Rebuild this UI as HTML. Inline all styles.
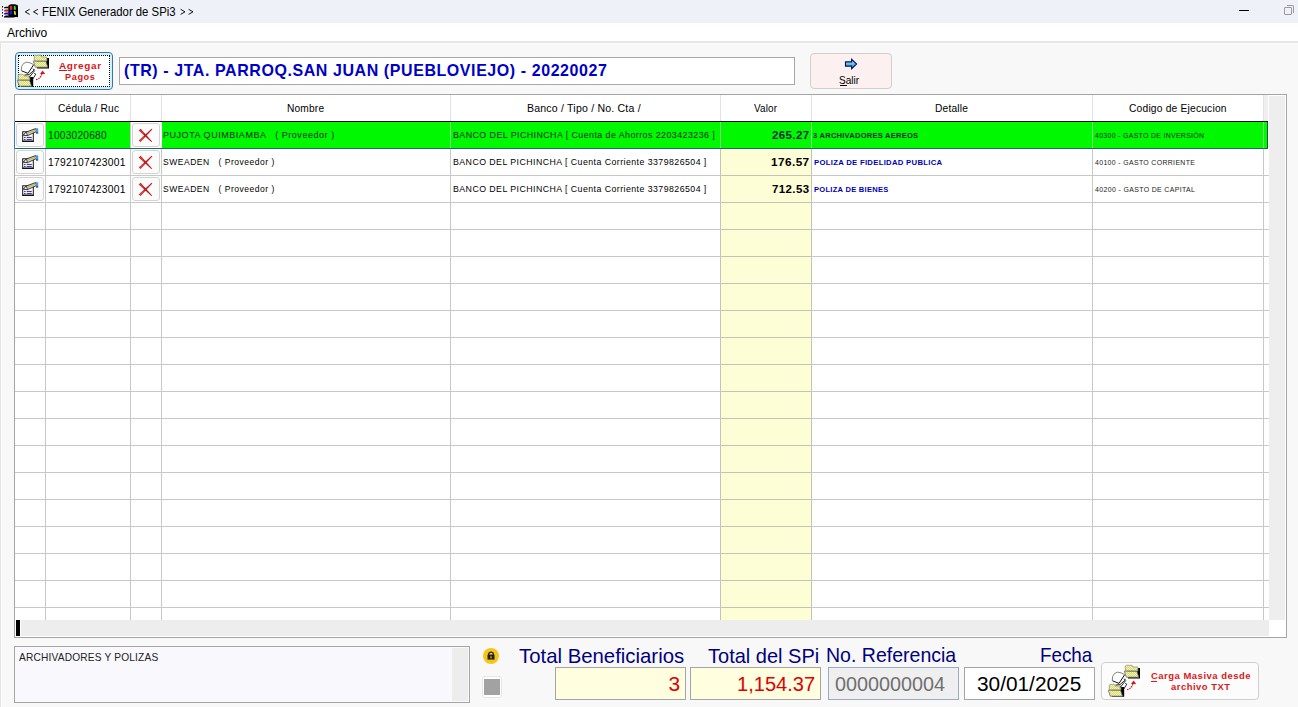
<!DOCTYPE html>
<html><head><meta charset="utf-8">
<style>
*{margin:0;padding:0;box-sizing:border-box}
html,body{width:1298px;height:707px;overflow:hidden;background:#f8f8f8;font-family:"Liberation Sans",sans-serif;position:relative}
.a{position:absolute}
.t{position:absolute;white-space:nowrap;line-height:1;transform-origin:0 0}
.vl{position:absolute;width:1px;background:#c8c8c8;top:122px;height:498px}
.hs{position:absolute;width:1px;background:#e2e2e6;top:95px;height:26px}
.hl{position:absolute;height:1px;background:#c8c8c8;left:15px;width:1254px}
.btn{position:absolute;border:1px solid #d3d3d3;border-radius:3px;background:#fbfbfb}
</style></head>
<body>
<!-- title bar -->
<div class="a" style="left:0;top:0;width:1298px;height:19px;background:#eef2f8"></div>
<div class="a" style="left:0;top:19px;width:1298px;height:4px;background:#f0f0f4"></div>
<!-- app icon -->
<svg class="a" style="left:0;top:0" width="20" height="20" viewBox="0 0 20 20">
<rect x="2" y="6" width="1" height="1.5" fill="#000"/><rect x="2" y="9" width="1" height="1.5" fill="#7a2020"/>
<rect x="2" y="12" width="1" height="1.5" fill="#101080"/><rect x="2" y="15" width="1" height="1.5" fill="#000"/>
<path d="M4 7.3 H5 L5.5 6.8 H8.5 V8.2 H4 Z" fill="#000"/>
<path d="M4 10.2 H5 L5.5 9.6 H8.5 V11.5 H4 Z" fill="#d01010"/>
<path d="M4 13.2 H5 L5.5 12.6 H8.5 V14.5 H4 Z" fill="#1010c0"/>
<path d="M4 16.2 H5 L5.5 15.6 H8.5 V17.5 H4 Z" fill="#000"/>
<path d="M8.3 5.8 Q9 4.8 10.5 4.5 L11 4.2 H15 L16.5 4.8 Q17.5 5 18 5.8 V17.5 L17.2 17 H15 L14 17.5 H10 L8.3 17.8 Z" fill="#000"/>
<path d="M9.8 6 L12.3 5.8 L12.3 9.8 L9.8 10 Z" fill="#e02828"/>
<path d="M13.8 5.8 L15.5 6.2 L16 9.8 L13.8 9.8 Z" fill="#30e040"/>
<path d="M9.8 10.8 L12.3 10.8 L12.3 14.5 L9.8 14.5 Z" fill="#1818d8"/>
<path d="M13.8 11 L15.5 11.2 L16 15 L14.2 14.6 Z" fill="#f0e820"/>
</svg>
<svg class="a" style="left:20px;top:6px" width="180" height="12" viewBox="0 0 180 12">
<path d="M9.6 3.3 L5.2 5.85 L9.6 8.4 M17.9 3.3 L13.5 5.85 L17.9 8.4 M160.6 3.3 L165 5.85 L160.6 8.4 M168.6 3.3 L173 5.85 L168.6 8.4" fill="none" stroke="#111" stroke-width="1"/>
</svg>
<!-- window buttons -->
<div class="a" style="left:1239px;top:10px;width:10px;height:1px;background:#000"></div>
<div class="a" style="left:1284px;top:7px;width:8px;height:8px;border:1px solid #9a9a9a;border-radius:1px"></div>
<div class="a" style="left:1287px;top:5px;width:7px;height:8px;border-top:1px solid #9a9a9a;border-right:1px solid #9a9a9a;border-radius:0 2px 0 0"></div>
<!-- menu bar -->
<div class="a" style="left:0;top:23px;width:1298px;height:18px;background:#fff"></div>
<div class="a" style="left:0;top:41px;width:1298px;height:2px;background:#e6e6e8"></div>
<div class="a" style="left:0;top:43px;width:1298px;height:1px;background:#fdfdfd"></div>
<div class="a" style="left:0;top:43px;width:1px;height:664px;background:#e4e4e6"></div>
<div class="a" style="left:1px;top:44px;width:1px;height:663px;background:#fdfdfd"></div>

<!-- Agregar button -->
<div class="a" style="left:15px;top:52px;width:98px;height:38px;border:1px solid #3a72ac;border-radius:4px;background:#fff;box-shadow:inset 0 0 0 2px #ccf2fc"></div>
<div class="a" style="left:18px;top:55px;width:92px;height:32px;border:1px dotted #000"></div>
<svg id="icoA" class="a" style="left:15px;top:53px" width="36" height="36" viewBox="0 0 36 36">
<defs><pattern id="chk" width="2" height="2" patternUnits="userSpaceOnUse"><rect width="2" height="2" fill="#f4f4b8"/><rect width="1" height="1" fill="#d8d870"/><rect x="1" y="1" width="1" height="1" fill="#d8d870"/></pattern></defs>
<path d="M22 5 H34 V15.5 H22 Z" fill="#000"/>
<path d="M19.3 8 V3 L20 2.3 H26 L27 4 H31.8 V8 Z" fill="url(#chk)" stroke="#9a9a7a" stroke-width="0.8"/>
<path d="M18.3 8.2 H30.8 L32.8 14.2 H20.3 Z" fill="url(#chk)" stroke="#6a6a6a" stroke-width="0.8"/>
<path d="M6 24 H18.2 V33.8 H6 Z" fill="#000"/>
<path d="M3.3 27 V22 L4 21.3 H8 L9 23 H14.8 V27 Z" fill="url(#chk)" stroke="#9a9a7a" stroke-width="0.8"/>
<path d="M2.3 27.2 H14.5 L16.5 33.2 H4.3 Z" fill="url(#chk)" stroke="#6a6a6a" stroke-width="0.8"/>
<path d="M6.3 17.8 L6.6 13.5 L8.5 10.5 L11.5 9.2 L15 9.8 L18.6 11.6 L13 20.4 Z" fill="#fff" stroke="none"/>
<path d="M6.3 17.8 L6.6 13.5 L8.5 10.5 L11.5 9.2 L15 9.8 L18.6 11.6" fill="none" stroke="#666" stroke-width="0.8"/>
<path d="M6.5 17.8 L13 20.4 L18.6 11.8" fill="none" stroke="#111" stroke-width="1"/>
<path d="M9.5 22 L14 21.6 L19.5 16.8 L17.8 16 M14 24.5 L19.8 17.5 M16.2 28.5 L20.8 21.2 L19.2 20.4" fill="none" stroke="#111" stroke-width="0.9"/>
<path d="M21 26.6 Q25.6 26 27.2 20" fill="none" stroke="#e01010" stroke-width="1.1" stroke-dasharray="1.6 0.8"/>
<path d="M25 21 L27.6 17.6 L30.2 21 Z" fill="#e01010"/>
</svg>
<div class="a" style="left:59px;top:70px;width:8px;height:1px;background:#d81020"></div>

<!-- header textbox -->
<div class="a" style="left:119px;top:57px;width:676px;height:28px;border:1px solid #a8a8a8;background:#fff"></div>

<!-- Salir button -->
<div class="a" style="left:810px;top:53px;width:82px;height:36px;border:1px solid #cfcfcf;border-radius:4px;background:#fdf0f0"></div>
<svg class="a" style="left:844px;top:58px" width="15" height="12" viewBox="0 0 15 12">
<defs><linearGradient id="ag" x1="0" y1="0" x2="0" y2="1"><stop offset="0" stop-color="#bfe8ff"/><stop offset="0.5" stop-color="#5cc0f4"/><stop offset="1" stop-color="#2a90d8"/></linearGradient></defs>
<path d="M1.5 3.9 H7.6 V1.3 L12.6 6 L7.6 10.7 V8.1 H1.5 Z" fill="url(#ag)" stroke="#001050" stroke-width="1.1" stroke-linejoin="miter"/>
</svg>
<div class="a" style="left:840px;top:85px;width:7px;height:1px;background:#000"></div>

<!-- GRID -->
<div class="a" style="left:14px;top:94px;width:1273px;height:544px;border:1px solid #a5a5a5;background:#fff"></div>
<!-- valor column yellow -->
<div class="a" style="left:721px;top:149px;width:90px;height:471px;background:#fdfdd6"></div>
<!-- header right gray -->
<div class="a" style="left:1264px;top:95px;width:4px;height:26px;background:#efefef"></div>
<!-- vertical scrollbar -->
<div class="a" style="left:1269px;top:96px;width:16px;height:524px;background:#eeeeee"></div>
<!-- horizontal scrollbar -->
<div class="a" style="left:21px;top:620px;width:1248px;height:16px;background:#ededed"></div>
<div class="a" style="left:16px;top:620px;width:4px;height:16px;background:#000"></div>
<div class="a" style="left:1269px;top:620px;width:17px;height:17px;background:#fff"></div>
<!-- vertical lines -->
<div class="hs" style="left:45px"></div>
<div class="hs" style="left:130px"></div>
<div class="hs" style="left:161px"></div>
<div class="hs" style="left:450px"></div>
<div class="hs" style="left:720px"></div>
<div class="hs" style="left:811px"></div>
<div class="hs" style="left:1092px"></div>
<div class="hs" style="left:1263px"></div>
<div class="vl" style="left:45px"></div>
<div class="vl" style="left:130px"></div>
<div class="vl" style="left:161px"></div>
<div class="vl" style="left:450px"></div>
<div class="vl" style="left:720px;background:#c4c4b4"></div>
<div class="vl" style="left:811px;background:#c4c4b4"></div>
<div class="vl" style="left:1092px"></div>
<div class="vl" style="left:1263px"></div>
<!-- horizontal lines -->
<div class="hl" style="top:175px"></div>
<div class="a" style="left:721px;top:175px;width:90px;height:1px;background:#c4c4b4"></div>
<div class="hl" style="top:202px"></div>
<div class="a" style="left:721px;top:202px;width:90px;height:1px;background:#c4c4b4"></div>
<div class="hl" style="top:229px"></div>
<div class="a" style="left:721px;top:229px;width:90px;height:1px;background:#c4c4b4"></div>
<div class="hl" style="top:256px"></div>
<div class="a" style="left:721px;top:256px;width:90px;height:1px;background:#c4c4b4"></div>
<div class="hl" style="top:283px"></div>
<div class="a" style="left:721px;top:283px;width:90px;height:1px;background:#c4c4b4"></div>
<div class="hl" style="top:310px"></div>
<div class="a" style="left:721px;top:310px;width:90px;height:1px;background:#c4c4b4"></div>
<div class="hl" style="top:337px"></div>
<div class="a" style="left:721px;top:337px;width:90px;height:1px;background:#c4c4b4"></div>
<div class="hl" style="top:364px"></div>
<div class="a" style="left:721px;top:364px;width:90px;height:1px;background:#c4c4b4"></div>
<div class="hl" style="top:391px"></div>
<div class="a" style="left:721px;top:391px;width:90px;height:1px;background:#c4c4b4"></div>
<div class="hl" style="top:418px"></div>
<div class="a" style="left:721px;top:418px;width:90px;height:1px;background:#c4c4b4"></div>
<div class="hl" style="top:445px"></div>
<div class="a" style="left:721px;top:445px;width:90px;height:1px;background:#c4c4b4"></div>
<div class="hl" style="top:472px"></div>
<div class="a" style="left:721px;top:472px;width:90px;height:1px;background:#c4c4b4"></div>
<div class="hl" style="top:499px"></div>
<div class="a" style="left:721px;top:499px;width:90px;height:1px;background:#c4c4b4"></div>
<div class="hl" style="top:526px"></div>
<div class="a" style="left:721px;top:526px;width:90px;height:1px;background:#c4c4b4"></div>
<div class="hl" style="top:553px"></div>
<div class="a" style="left:721px;top:553px;width:90px;height:1px;background:#c4c4b4"></div>
<div class="hl" style="top:580px"></div>
<div class="a" style="left:721px;top:580px;width:90px;height:1px;background:#c4c4b4"></div>
<div class="hl" style="top:607px"></div>
<div class="a" style="left:721px;top:607px;width:90px;height:1px;background:#c4c4b4"></div>
<!-- header bottom -->
<div class="a" style="left:15px;top:121px;width:1253px;height:1px;background:#000"></div>
<!-- selected row -->
<div class="a" style="left:46px;top:122px;width:1222px;height:26px;background:#00f800;border-right:1px solid #0a5a3a"></div>
<div class="a" style="left:15px;top:148px;width:1253px;height:1px;background:#1a6a6a"></div>
<div class="a" style="left:14px;top:122px;width:2px;height:27px;background:#3a7ac0"></div>
<div class="a" style="left:15px;top:122px;width:30px;height:26px;background:#fff"></div>
<div class="a" style="left:131px;top:122px;width:31px;height:26px;background:#fff"></div>
<!-- light green column lines in selected row -->
<div class="a" style="left:130px;top:122px;width:1px;height:26px;background:#c8c8c8"></div>
<div class="a" style="left:450px;top:122px;width:1px;height:26px;background:#80f880"></div>
<div class="a" style="left:720px;top:122px;width:1px;height:26px;background:#80f880"></div>
<div class="a" style="left:811px;top:122px;width:1px;height:26px;background:#80f880"></div>
<div class="a" style="left:1092px;top:122px;width:1px;height:26px;background:#80f880"></div>
<div class="a" style="left:1263px;top:122px;width:1px;height:26px;background:#80f880"></div>
<div class="btn" style="left:16px;top:123px;width:28px;height:24px"></div>
<svg class="a" style="left:21px;top:128px" width="18" height="16" viewBox="0 0 18 16">
<rect x="1.7" y="3.8" width="10.6" height="9.4" fill="#fff" stroke="#111" stroke-width="1"/>
<rect x="1.2" y="12.7" width="11.6" height="1.3" fill="#111"/>
<rect x="3" y="8.9" width="1.6" height="1" fill="#2a2a9a"/><rect x="5.6" y="8.9" width="5.2" height="1" fill="#2a2a9a"/>
<rect x="3" y="10.9" width="1.6" height="1" fill="#2a2a9a"/><rect x="5.6" y="10.9" width="5.2" height="1" fill="#2a2a9a"/>
<path d="M2.4 7.2 L5.2 4 L14.6 0.6 L15.8 3.4 L6.6 7.6 Z" fill="#ddd6a4" stroke="#111" stroke-width="0.8" stroke-linejoin="round"/>
<path d="M2.4 7.2 L5.2 4 L6.6 7.6 Z" fill="#fff" stroke="#111" stroke-width="0.7"/>
<path d="M5.6 5.6 L14.8 2" stroke="#8a8050" stroke-width="0.5"/>
<rect x="15" y="0.3" width="2.2" height="4.6" fill="#3a9ee8"/>
<rect x="15" y="4.6" width="2.2" height="0.9" fill="#111"/>
</svg>
<div class="btn" style="left:132px;top:123px;width:28px;height:24px"></div>
<svg class="a" style="left:138px;top:128px" width="15" height="15" viewBox="0 0 15 15">
<path d="M0.8 2.4 L2.6 0.8 L14.1 13.5 L13.4 14.1 Z" fill="#b80e0e"/>
<path d="M0.8 12.5 L2.5 14.1 L14.3 1.4 L13.6 0.8 Z" fill="#c41414"/>
<path d="M1.6 2.3 L2.5 1.5 L6 5.4 L5.2 6.1 Z" fill="#ff6a6a" opacity="0.6"/>
<path d="M1.6 12.6 L2.5 13.4 L6 9.6 L5.2 8.9 Z" fill="#ff6a6a" opacity="0.6"/>
</svg>
<div class="btn" style="left:16px;top:150px;width:28px;height:24px"></div>
<svg class="a" style="left:21px;top:155px" width="18" height="16" viewBox="0 0 18 16">
<rect x="1.7" y="3.8" width="10.6" height="9.4" fill="#fff" stroke="#111" stroke-width="1"/>
<rect x="1.2" y="12.7" width="11.6" height="1.3" fill="#111"/>
<rect x="3" y="8.9" width="1.6" height="1" fill="#2a2a9a"/><rect x="5.6" y="8.9" width="5.2" height="1" fill="#2a2a9a"/>
<rect x="3" y="10.9" width="1.6" height="1" fill="#2a2a9a"/><rect x="5.6" y="10.9" width="5.2" height="1" fill="#2a2a9a"/>
<path d="M2.4 7.2 L5.2 4 L14.6 0.6 L15.8 3.4 L6.6 7.6 Z" fill="#ddd6a4" stroke="#111" stroke-width="0.8" stroke-linejoin="round"/>
<path d="M2.4 7.2 L5.2 4 L6.6 7.6 Z" fill="#fff" stroke="#111" stroke-width="0.7"/>
<path d="M5.6 5.6 L14.8 2" stroke="#8a8050" stroke-width="0.5"/>
<rect x="15" y="0.3" width="2.2" height="4.6" fill="#3a9ee8"/>
<rect x="15" y="4.6" width="2.2" height="0.9" fill="#111"/>
</svg>
<div class="btn" style="left:132px;top:150px;width:28px;height:24px"></div>
<svg class="a" style="left:138px;top:155px" width="15" height="15" viewBox="0 0 15 15">
<path d="M0.8 2.4 L2.6 0.8 L14.1 13.5 L13.4 14.1 Z" fill="#b80e0e"/>
<path d="M0.8 12.5 L2.5 14.1 L14.3 1.4 L13.6 0.8 Z" fill="#c41414"/>
<path d="M1.6 2.3 L2.5 1.5 L6 5.4 L5.2 6.1 Z" fill="#ff6a6a" opacity="0.6"/>
<path d="M1.6 12.6 L2.5 13.4 L6 9.6 L5.2 8.9 Z" fill="#ff6a6a" opacity="0.6"/>
</svg>
<div class="btn" style="left:16px;top:177px;width:28px;height:24px"></div>
<svg class="a" style="left:21px;top:182px" width="18" height="16" viewBox="0 0 18 16">
<rect x="1.7" y="3.8" width="10.6" height="9.4" fill="#fff" stroke="#111" stroke-width="1"/>
<rect x="1.2" y="12.7" width="11.6" height="1.3" fill="#111"/>
<rect x="3" y="8.9" width="1.6" height="1" fill="#2a2a9a"/><rect x="5.6" y="8.9" width="5.2" height="1" fill="#2a2a9a"/>
<rect x="3" y="10.9" width="1.6" height="1" fill="#2a2a9a"/><rect x="5.6" y="10.9" width="5.2" height="1" fill="#2a2a9a"/>
<path d="M2.4 7.2 L5.2 4 L14.6 0.6 L15.8 3.4 L6.6 7.6 Z" fill="#ddd6a4" stroke="#111" stroke-width="0.8" stroke-linejoin="round"/>
<path d="M2.4 7.2 L5.2 4 L6.6 7.6 Z" fill="#fff" stroke="#111" stroke-width="0.7"/>
<path d="M5.6 5.6 L14.8 2" stroke="#8a8050" stroke-width="0.5"/>
<rect x="15" y="0.3" width="2.2" height="4.6" fill="#3a9ee8"/>
<rect x="15" y="4.6" width="2.2" height="0.9" fill="#111"/>
</svg>
<div class="btn" style="left:132px;top:177px;width:28px;height:24px"></div>
<svg class="a" style="left:138px;top:182px" width="15" height="15" viewBox="0 0 15 15">
<path d="M0.8 2.4 L2.6 0.8 L14.1 13.5 L13.4 14.1 Z" fill="#b80e0e"/>
<path d="M0.8 12.5 L2.5 14.1 L14.3 1.4 L13.6 0.8 Z" fill="#c41414"/>
<path d="M1.6 2.3 L2.5 1.5 L6 5.4 L5.2 6.1 Z" fill="#ff6a6a" opacity="0.6"/>
<path d="M1.6 12.6 L2.5 13.4 L6 9.6 L5.2 8.9 Z" fill="#ff6a6a" opacity="0.6"/>
</svg>

<!-- BOTTOM -->
<div class="a" style="left:14px;top:646px;width:456px;height:57px;border:1px solid #a5a5a5;background:#f8f8fd"></div>
<div class="a" style="left:452px;top:648px;width:16px;height:53px;background:#ededed"></div>
<!-- lock -->
<svg class="a" style="left:482px;top:647px" width="18" height="18" viewBox="0 0 18 18">
<circle cx="9" cy="9" r="8" fill="#f5c518"/>
<path d="M6.7 8 V7 A2.3 1.9 0 0 1 11.3 7 V8" fill="none" stroke="#222" stroke-width="1.3"/>
<rect x="5.5" y="7.6" width="7" height="5" fill="#222"/>
<rect x="8.4" y="9.2" width="1.3" height="2.2" fill="#c8a818"/>
</svg>
<div class="a" style="left:482px;top:676px;width:20px;height:22px;border:1px solid #e6e6e6;border-radius:3px;background:#fdfdfd"></div>
<div class="a" style="left:484px;top:679px;width:16px;height:16px;background:#a2a2a2"></div>
<!-- value boxes -->
<div class="a" style="left:555px;top:667px;width:131px;height:33px;border:1px solid #a5a5a5;background:#ffffe0"></div>
<div class="a" style="left:690px;top:667px;width:131px;height:33px;border:1px solid #a5a5a5;background:#ffffe0"></div>
<div class="a" style="left:828px;top:667px;width:131px;height:33px;border:1px solid #9cacc0;background:#efeff0"></div>
<div class="a" style="left:964px;top:667px;width:131px;height:33px;border:1px solid #a5a5a5;background:#fff"></div>
<!-- carga button -->
<div class="a" style="left:1101px;top:662px;width:158px;height:38px;border:1px solid #cfcfcf;border-radius:4px;background:#fcfcfc"></div>
<svg id="icoB" class="a" style="left:1106px;top:663px" width="36" height="36" viewBox="0 0 36 36">
<defs><pattern id="chk2" width="2" height="2" patternUnits="userSpaceOnUse"><rect width="2" height="2" fill="#f4f4b8"/><rect width="1" height="1" fill="#d8d870"/><rect x="1" y="1" width="1" height="1" fill="#d8d870"/></pattern></defs>
<path d="M22 5 H34 V15.5 H22 Z" fill="#000"/>
<path d="M19.3 8 V3 L20 2.3 H26 L27 4 H31.8 V8 Z" fill="url(#chk2)" stroke="#9a9a7a" stroke-width="0.8"/>
<path d="M18.3 8.2 H30.8 L32.8 14.2 H20.3 Z" fill="url(#chk2)" stroke="#6a6a6a" stroke-width="0.8"/>
<path d="M6 24 H18.2 V33.8 H6 Z" fill="#000"/>
<path d="M3.3 27 V22 L4 21.3 H8 L9 23 H14.8 V27 Z" fill="url(#chk2)" stroke="#9a9a7a" stroke-width="0.8"/>
<path d="M2.3 27.2 H14.5 L16.5 33.2 H4.3 Z" fill="url(#chk2)" stroke="#6a6a6a" stroke-width="0.8"/>
<path d="M6.3 17.8 L6.6 13.5 L8.5 10.5 L11.5 9.2 L15 9.8 L18.6 11.6 L13 20.4 Z" fill="#fff" stroke="none"/>
<path d="M6.3 17.8 L6.6 13.5 L8.5 10.5 L11.5 9.2 L15 9.8 L18.6 11.6" fill="none" stroke="#666" stroke-width="0.8"/>
<path d="M6.5 17.8 L13 20.4 L18.6 11.8" fill="none" stroke="#111" stroke-width="1"/>
<path d="M9.5 22 L14 21.6 L19.5 16.8 L17.8 16 M14 24.5 L19.8 17.5 M16.2 28.5 L20.8 21.2 L19.2 20.4" fill="none" stroke="#111" stroke-width="0.9"/>
<path d="M21 26.6 Q25.6 26 27.2 20" fill="none" stroke="#e01010" stroke-width="1.1" stroke-dasharray="1.6 0.8"/>
<path d="M25 21 L27.6 17.6 L30.2 21 Z" fill="#e01010"/>
</svg>
<div class="a" style="left:1151px;top:681px;width:6px;height:1px;background:#e01818"></div>

<div class="t" style="left:42.26px;top:6.00px;font-size:12.03px;font-weight:400;color:#000;transform:scaleX(0.9429);letter-spacing:0px;">FENIX Generador de SPi3</div>
<div class="t" style="left:7.40px;top:27.00px;font-size:12.32px;font-weight:400;color:#000;transform:scaleX(0.9780);letter-spacing:0px;">Archivo</div>
<div class="t" style="left:59.00px;top:61.00px;font-size:9.57px;font-weight:700;color:#d81818;transform:scaleX(1.0450);letter-spacing:0.6px;">Agregar</div>
<div class="t" style="left:65.01px;top:73.00px;font-size:9.28px;font-weight:700;color:#d81818;transform:scaleX(0.9897);letter-spacing:0.6px;">Pagos</div>
<div class="t" style="left:123.62px;top:62.00px;font-size:16.38px;font-weight:700;color:#0000c8;transform:scaleX(0.9765);letter-spacing:0.6px;">(TR) - JTA. PARROQ.SAN JUAN (PUEBLOVIEJO) - 20220027</div>
<div class="t" style="left:838.99px;top:75.00px;font-size:11.01px;font-weight:400;color:#000;transform:scaleX(0.9095);letter-spacing:0px;">Salir</div>
<div class="t" style="left:57.70px;top:103.00px;font-size:10.72px;font-weight:400;color:#000;transform:scaleX(0.9516);letter-spacing:0.2px;">C&eacute;dula / Ruc</div>
<div class="t" style="left:287.00px;top:103.00px;font-size:11.3px;font-weight:400;color:#000;transform:scaleX(0.9000);letter-spacing:0.2px;">Nombre</div>
<div class="t" style="left:526.55px;top:103.00px;font-size:11.16px;font-weight:400;color:#000;transform:scaleX(0.9471);letter-spacing:0.2px;">Banco / Tipo / No. Cta /</div>
<div class="t" style="left:754.00px;top:103.00px;font-size:11.16px;font-weight:400;color:#000;transform:scaleX(0.8885);letter-spacing:0.2px;">Valor</div>
<div class="t" style="left:934.78px;top:103.00px;font-size:11.16px;font-weight:400;color:#000;transform:scaleX(0.9171);letter-spacing:0.2px;">Detalle</div>
<div class="t" style="left:1128.78px;top:103.00px;font-size:11.16px;font-weight:400;color:#000;transform:scaleX(0.9202);letter-spacing:0.2px;">Codigo de Ejecucion</div>
<div class="t" style="left:48.28px;top:130.00px;font-size:11.01px;font-weight:400;color:#0a2a1a;transform:scaleX(0.9175);letter-spacing:0.3px;">1003020680</div>
<div class="t" style="left:48.04px;top:157.00px;font-size:11.3px;font-weight:400;color:#000;transform:scaleX(0.9089);letter-spacing:0.3px;">1792107423001</div>
<div class="t" style="left:48.04px;top:184.00px;font-size:11.3px;font-weight:400;color:#000;transform:scaleX(0.9089);letter-spacing:0.3px;">1792107423001</div>
<div class="t" style="left:163.36px;top:130.00px;font-size:9.57px;font-weight:400;color:#0a2a1a;transform:scaleX(0.9370);letter-spacing:0.6px;">PUJOTA QUIMBIAMBA &nbsp; ( Proveedor )</div>
<div class="t" style="left:163.42px;top:157.00px;font-size:9.71px;font-weight:400;color:#000;transform:scaleX(0.8778);letter-spacing:0.6px;">SWEADEN &nbsp; ( Proveedor )</div>
<div class="t" style="left:163.42px;top:184.00px;font-size:9.71px;font-weight:400;color:#000;transform:scaleX(0.8778);letter-spacing:0.6px;">SWEADEN &nbsp; ( Proveedor )</div>
<div class="t" style="left:452.68px;top:130.00px;font-size:9.57px;font-weight:400;color:#0a2a1a;transform:scaleX(0.9216);letter-spacing:0.5px;">BANCO DEL PICHINCHA [ Cuenta de Ahorros 2203423236 ]</div>
<div class="t" style="left:452.71px;top:157.00px;font-size:9.86px;font-weight:400;color:#000;transform:scaleX(0.8919);letter-spacing:0.5px;">BANCO DEL PICHINCHA [ Cuenta Corriente 3379826504 ]</div>
<div class="t" style="left:452.71px;top:184.00px;font-size:9.86px;font-weight:400;color:#000;transform:scaleX(0.8919);letter-spacing:0.5px;">BANCO DEL PICHINCHA [ Cuenta Corriente 3379826504 ]</div>
<div class="t" style="left:771.70px;top:130.00px;font-size:11.01px;font-weight:700;color:#0a2a3a;transform:scaleX(1.0400);letter-spacing:0.4px;">265.27</div>
<div class="t" style="left:770.63px;top:157.00px;font-size:11.01px;font-weight:700;color:#000;transform:scaleX(1.0706);letter-spacing:0.4px;">176.57</div>
<div class="t" style="left:771.70px;top:184.00px;font-size:11.01px;font-weight:700;color:#000;transform:scaleX(1.0400);letter-spacing:0.4px;">712.53</div>
<div class="t" style="left:813.48px;top:132.00px;font-size:8.12px;font-weight:700;color:#0a2a2a;transform:scaleX(0.9230);letter-spacing:0.3px;">3 ARCHIVADORES AEREOS</div>
<div class="t" style="left:814.40px;top:159.00px;font-size:8.12px;font-weight:700;color:#0000b8;transform:scaleX(0.9522);letter-spacing:0.3px;">POLIZA DE FIDELIDAD PUBLICA</div>
<div class="t" style="left:814.40px;top:186.00px;font-size:8.12px;font-weight:700;color:#0000b8;transform:scaleX(0.9300);letter-spacing:0.3px;">POLIZA DE BIENES</div>
<div class="t" style="left:1095.00px;top:132.00px;font-size:7.68px;font-weight:400;color:#0a2a1a;transform:scaleX(0.8934);letter-spacing:0.4px;">40300 - GASTO DE INVERSI&Oacute;N</div>
<div class="t" style="left:1095.00px;top:159.00px;font-size:7.68px;font-weight:400;color:#222;transform:scaleX(0.9000);letter-spacing:0.4px;">40100 - GASTO CORRIENTE</div>
<div class="t" style="left:1095.00px;top:186.00px;font-size:7.68px;font-weight:400;color:#222;transform:scaleX(0.9055);letter-spacing:0.4px;">40200 - GASTO DE CAPITAL</div>
<div class="t" style="left:19.40px;top:652.00px;font-size:11.01px;font-weight:400;color:#222;transform:scaleX(0.9225);letter-spacing:0.2px;">ARCHIVADORES Y POLIZAS</div>
<div class="t" style="left:519.10px;top:646.00px;font-size:20.87px;font-weight:400;color:#000080;transform:scaleX(0.9757);letter-spacing:0px;">Total Beneficiarios</div>
<div class="t" style="left:707.70px;top:646.00px;font-size:20.87px;font-weight:400;color:#000080;transform:scaleX(0.9591);letter-spacing:0px;">Total del SPi</div>
<div class="t" style="left:826.08px;top:645.00px;font-size:20.29px;font-weight:400;color:#000080;transform:scaleX(0.9624);letter-spacing:0px;">No. Referencia</div>
<div class="t" style="left:1040.04px;top:645.00px;font-size:20.29px;font-weight:400;color:#000080;transform:scaleX(0.9278);letter-spacing:0px;">Fecha</div>
<div class="t" style="left:668.60px;top:674.00px;font-size:20.87px;font-weight:400;color:#e00000;transform:scaleX(1.0000);letter-spacing:0px;">3</div>
<div class="t" style="left:736.97px;top:674.00px;font-size:20.87px;font-weight:400;color:#e00000;transform:scaleX(0.9628);letter-spacing:0px;">1,154.37</div>
<div class="t" style="left:834.65px;top:674.00px;font-size:20.87px;font-weight:400;color:#707070;transform:scaleX(0.9478);letter-spacing:0px;">0000000004</div>
<div class="t" style="left:976.67px;top:674.00px;font-size:20.29px;font-weight:400;color:#000;transform:scaleX(1.0270);letter-spacing:0px;">30/01/2025</div>
<div class="t" style="left:1151.30px;top:671.00px;font-size:9.42px;font-weight:700;color:#d81818;transform:scaleX(1.0061);letter-spacing:0.5px;">Carga Masiva desde</div>
<div class="t" style="left:1171.40px;top:682.00px;font-size:9.42px;font-weight:700;color:#d81818;transform:scaleX(1.0034);letter-spacing:0.5px;">archivo TXT</div>
</body></html>
